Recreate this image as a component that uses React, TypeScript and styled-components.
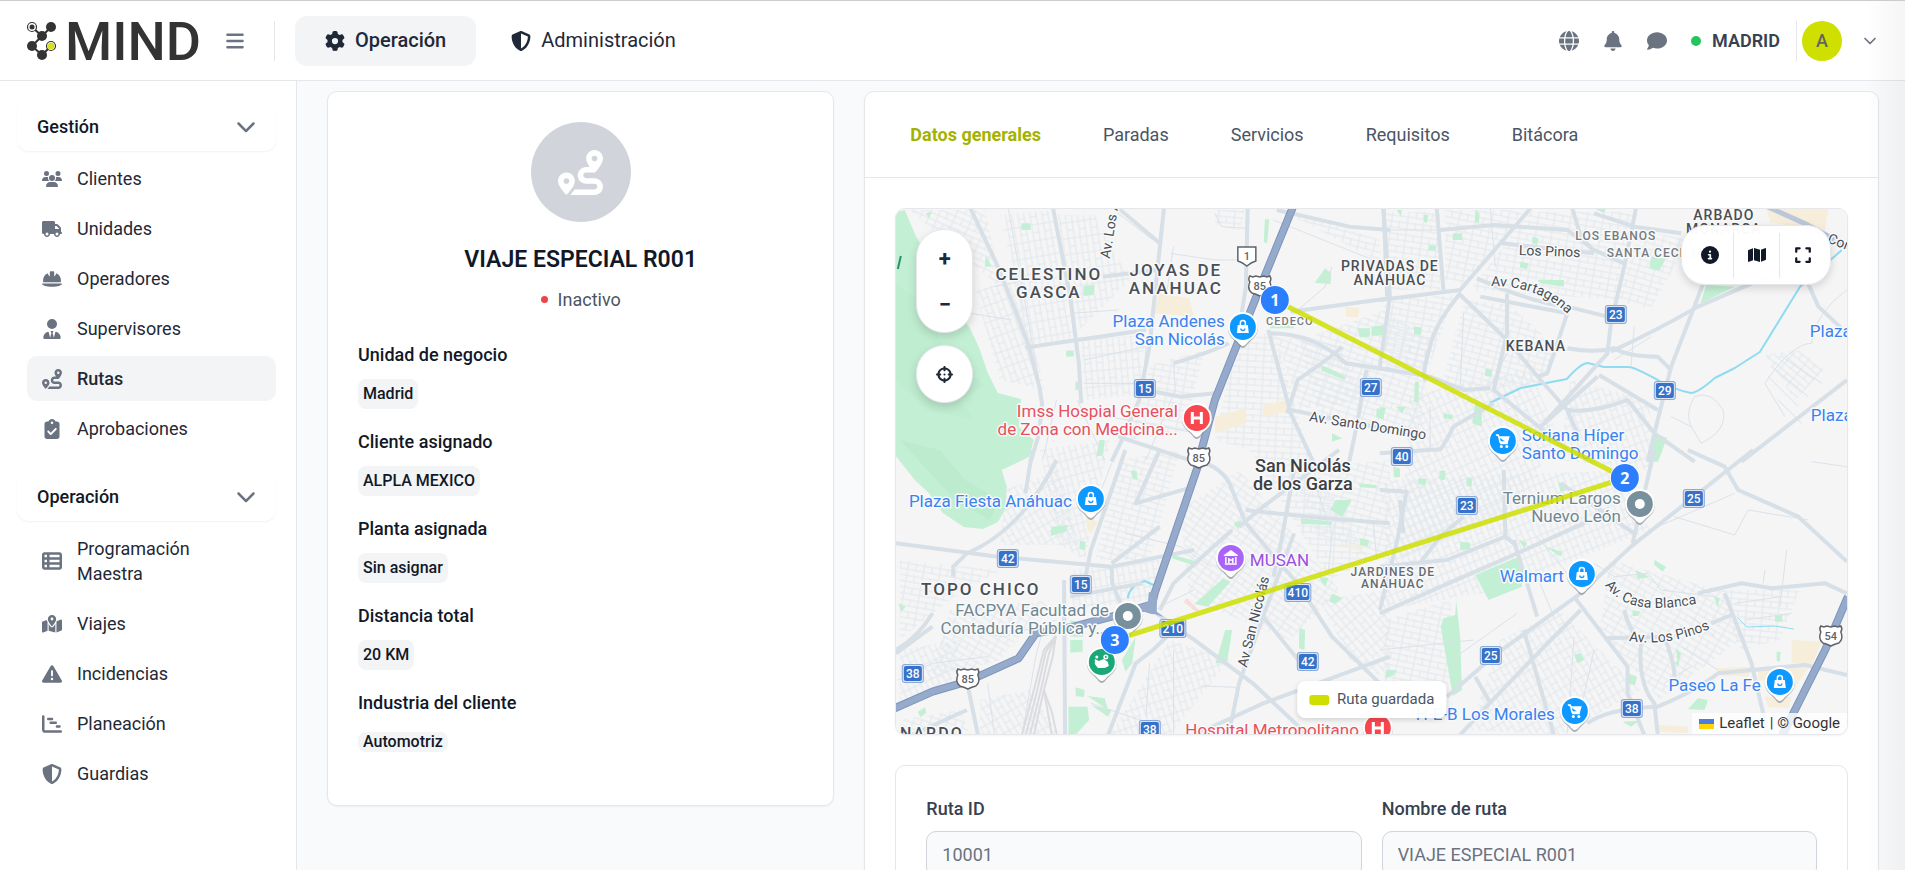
import React from 'react';
import styled, { createGlobalStyle } from 'styled-components';
import {
  FaBars,
  FaBell,
  FaChartGantt,
  FaChevronDown,
  FaCircleInfo,
  FaClipboardCheck,
  FaComment,
  FaCrosshairs,
  FaExpand,
  FaGear,
  FaGlobe,
  FaHelmetSafety,
  FaMap,
  FaMapLocationDot,
  FaRoute,
  FaShieldHalved,
  FaTableList,
  FaTriangleExclamation,
  FaTruck,
  FaUserTie,
  FaUsers,
} from 'react-icons/fa6';
import { ChevronDown } from 'lucide-react';

const GlobalStyle = createGlobalStyle`
  *, *::before, *::after { box-sizing: border-box; }
  body {
    margin: 0;
    background: #f9fafc;
    color: #1f2937;
    font-family: Roboto, "Liberation Sans", sans-serif;
    font-size: 18px;
    line-height: 25px;
  }
  button, input { font: inherit; color: inherit; }
  button { background: none; border: 0; padding: 0; cursor: pointer; }
  a { color: inherit; text-decoration: none; }
  ul { list-style: none; margin: 0; padding: 0; }
  h1, h2, p, dl, dd { margin: 0; }
`;

/* ---------- shell ---------- */

const Shell = styled.div`
  position: relative;
  display: flex;
  flex-direction: column;
  height: 100vh;
  overflow: hidden;
  border-top: 1px solid #cccccc;
`;

const EdgeShade = styled.div`
  position: absolute;
  inset: 0 0 0 auto;
  width: 40px;
  pointer-events: none;
  background: linear-gradient(to right, rgba(0, 0, 0, 0), rgba(0, 0, 0, 0.04));
`;

const Header = styled.header`
  flex: none;
  display: flex;
  align-items: center;
  height: 80px;
  padding: 0 25px 0 26px;
  background: #fff;
  border-bottom: 1px solid #e5e7eb;
`;

const Logo = styled.svg`
  width: 176px;
  height: 44px;
  overflow: visible;
`;

const IconButton = styled.button`
  display: flex;
  align-items: center;
  justify-content: center;
  width: 20px;
  height: 20px;
  color: #6b7280;
  font-size: 20px;
`;

const MenuButton = styled(IconButton)`
  margin: 0 29px 0 23px;
`;

const Rule = styled.span`
  width: 1px;
  height: 40px;
  background: #e5e7eb;
`;

const MainNav = styled.nav`
  display: flex;
  gap: 5px;
  margin-left: 20px;
`;

const MainNavLink = styled.a<{ $active?: boolean }>`
  display: flex;
  align-items: center;
  gap: 10px;
  height: 50px;
  padding: 0 30px;
  border-radius: 12px;
  background: ${p => (p.$active ? '#f3f4f6' : 'transparent')};
  font-size: 20px;
  font-weight: ${p => (p.$active ? 500 : 400)};
`;

const HeaderTools = styled.div`
  display: flex;
  align-items: center;
  gap: 24px;
  margin-left: auto;
`;

const Unit = styled.span`
  display: flex;
  align-items: center;
  gap: 11px;
  margin-right: -8px;
  font-weight: 600;
  color: #374151;
`;

const Dot = styled.span<{ $size: number; $color: string }>`
  width: ${p => p.$size}px;
  height: ${p => p.$size}px;
  border-radius: 50%;
  background: ${p => p.$color};
`;

const Account = styled.button`
  display: flex;
  align-items: center;
  color: #6b7280;
`;

const Avatar = styled.span`
  display: grid;
  place-items: center;
  width: 40px;
  height: 40px;
  margin: 0 18px 0 5px;
  border-radius: 50%;
  background: #cfdf00;
  color: #62665f;
  font-weight: 500;
`;

const Body = styled.div`
  flex: 1;
  display: flex;
  min-height: 0;
`;

/* ---------- sidebar ---------- */

const Sidebar = styled.aside`
  flex: none;
  width: 297px;
  padding: 20px 20px 20px 17px;
  background: #fff;
  border-right: 1px solid #e5e7eb;
`;

const Section = styled.section`
  margin-bottom: 20px;
`;

const SectionToggle = styled.button`
  display: flex;
  align-items: center;
  justify-content: space-between;
  width: 100%;
  height: 50px;
  padding: 0 20px;
  border-radius: 12px;
  box-shadow: 0 1px 2px rgba(0, 0, 0, 0.06);
  font-weight: 500;
  color: #111827;

  svg { color: #6b7280; font-size: 20px; }
`;

const SideList = styled.ul`
  display: flex;
  flex-direction: column;
  gap: 5px;
  margin: 5px 0 0 10px;
`;

const SideLink = styled.a<{ $active?: boolean }>`
  display: flex;
  align-items: center;
  gap: 15px;
  padding: 10px 60px 10px 15px;
  border-radius: 10px;
  background: ${p => (p.$active ? '#f3f4f6' : 'transparent')};
  font-weight: ${p => (p.$active ? 500 : 400)};

  svg { flex: none; width: 20px; height: 20px; color: #6b7280; }
`;

/* ---------- main area ---------- */

const Main = styled.main`
  flex: 1;
  min-width: 0;
  display: grid;
  grid-template-columns: minmax(0, 1fr) minmax(0, 2fr);
  align-items: start;
  gap: 30px;
  padding: 10px 26px 30px 30px;
  overflow: auto;
  scrollbar-width: none;
`;

const Card = styled.section`
  background: #fff;
  border: 1px solid #e5e7eb;
  border-radius: 10px;
  box-shadow: 0 1px 2px rgba(0, 0, 0, 0.05);
`;

const SummaryCard = styled(Card)`
  display: flex;
  flex-direction: column;
  align-items: center;
  padding: 30px 30px 48px;
`;

const RouteBadge = styled.div`
  display: grid;
  place-items: center;
  width: 100px;
  height: 100px;
  border-radius: 50%;
  background: #d1d5db;
  color: #fff;
  font-size: 45px;
`;

const RouteName = styled.h1`
  margin-top: 23px;
  font-size: 23px;
  line-height: 30px;
  font-weight: 600;
  color: #111827;
`;

const Status = styled.p`
  display: flex;
  align-items: center;
  gap: 10px;
  margin-top: 12px;
  color: #4b5563;
`;

const Facts = styled.dl`
  display: flex;
  flex-direction: column;
  gap: 20px;
  width: 100%;
  margin-top: 30px;
`;

const FactLabel = styled.dt`
  font-weight: 500;
  color: #111827;
`;

const FactValue = styled.dd<{ $compact?: boolean }>`
  display: flex;
  align-items: center;
  width: fit-content;
  height: ${p => (p.$compact ? 20 : 30)}px;
  margin: ${p => (p.$compact ? 17 : 12)}px 0 ${p => (p.$compact ? 5 : 0)}px;
  padding: 0 5px;
  border-radius: 8px;
  background: #f3f4f6;
  font-size: 16px;
  line-height: 20px;
  font-weight: 500;
  color: #111827;
`;

const Tabs = styled.nav`
  display: flex;
  gap: 62px;
  padding: 30px 45px;
  border-bottom: 1px solid #e5e7eb;
`;

const Tab = styled.a<{ $active?: boolean }>`
  font-weight: ${p => (p.$active ? 700 : 400)};
  color: ${p => (p.$active ? '#a3b300' : '#4b5563')};
`;

const Panel = styled.div`
  display: flex;
  flex-direction: column;
  gap: 30px;
  padding: 30px;
`;

/* ---------- map frame ---------- */

const MapFrame = styled.div`
  position: relative;
  height: 527px;
  border: 1px solid #e5e7eb;
  border-radius: 10px;
  overflow: hidden;
  box-shadow: 0 1px 2px rgba(0, 0, 0, 0.05);
`;

const MapSvg = styled.svg`
  display: block;
  width: 100%;
  height: 100%;
  font-family: Roboto, "Liberation Sans", sans-serif;
`;

const MapControls = styled.div`
  position: absolute;
  top: 20px;
  left: 20px;
  display: flex;
  flex-direction: column;
  gap: 12px;
`;

const ControlPill = styled.div`
  display: flex;
  flex-direction: column;
  width: 57px;
  padding: 5px 0;
  border: 1px solid #e5e7eb;
  border-radius: 28px;
  background: #fff;
  box-shadow: 0 4px 10px rgba(0, 0, 0, 0.15);
`;

const ControlButton = styled.button`
  display: grid;
  place-items: center;
  height: 46px;
  color: #1f2937;
  font-size: 22px;
  font-weight: 700;
`;

const MapToolbar = styled.div`
  position: absolute;
  top: 16px;
  right: 16px;
  display: flex;
  align-items: center;
  height: 60px;
  padding: 0 5px;
  border: 1px solid #e5e7eb;
  border-radius: 24px;
  background: rgba(255, 255, 255, 0.97);
  box-shadow: 0 3px 8px rgba(0, 0, 0, 0.15);
`;

const ToolButton = styled.button`
  display: grid;
  place-items: center;
  width: 46px;
  height: 45px;
  color: #111827;
  font-size: 18px;

  & + & { border-left: 1px solid #e5e7eb; }
`;

const Legend = styled.div`
  position: absolute;
  bottom: 16px;
  left: 50%;
  transform: translateX(-50%);
  display: flex;
  align-items: center;
  gap: 8px;
  height: 37px;
  padding: 0 12px;
  border-radius: 8px;
  background: rgba(255, 255, 255, 0.95);
  box-shadow: 0 2px 5px rgba(0, 0, 0, 0.14);
  font-size: 15px;
  white-space: nowrap;
  color: #4b5563;
`;

const LegendSwatch = styled.span`
  width: 20px;
  height: 10px;
  border-radius: 3px;
  background: #cfdf00;
`;

const Attribution = styled.div`
  position: absolute;
  right: 0;
  bottom: 0;
  display: flex;
  align-items: center;
  gap: 5px;
  padding: 0 7px;
  background: rgba(255, 255, 255, 0.8);
  font-size: 15px;
  line-height: 21px;
  color: #333;
`;

/* ---------- form ---------- */

const Form = styled.form`
  display: grid;
  grid-template-columns: 1fr 1fr;
  gap: 20px;
  padding: 30px;
  border: 1px solid #e5e7eb;
  border-radius: 10px;
`;

const Field = styled.div`
  display: flex;
  flex-direction: column;
  gap: 10px;
`;

const FieldLabel = styled.label`
  font-weight: 500;
  color: #374151;
`;

const TextInput = styled.input`
  width: 100%;
  height: 47px;
  padding: 0 15px;
  border: 1px solid #d1d5db;
  border-radius: 10px;
  background: #f9fafb;
  color: #6b7280;
`;

/* ---------- map drawing ---------- */

const GREEN = '#c3f0d4';
const CREAM = '#f6eddb';

type Tile = {
  at: string;
  roads: string[];
  lanes: string[];
  parks: string[];
  highway: string[];
  sand: string[];
};

/* The drawing is split in four tiles, each with its own origin and scale. */
const tiles: Tile[] = [
  {
    at: 'translate(850 80) scale(.3444 .3333)',
    roads: [
      'M350 385L430 560L480 690L520 800L550 920L558 970L550 1060L525 1145',
      'M590 385L640 650L665 850L672 970',
      'M912 385L890 600L870 800L840 960L790 1080L760 1145',
      'M1155 385L1150 620L1130 750',
      'M780 385L900 490',
      'M510 803L660 780L860 750',
      'M735 590L890 570',
      'M860 930L960 950L1060 940',
      'M940 850Q1040 820 1100 790',
      'M1280 695L1568 655',
      'M1240 390L1450 440L1568 450',
      'M1550 385L1560 650',
      'M1215 750L1280 1000L1345 1145',
      'M1220 760Q1350 760 1440 850L1568 870',
      'M1270 1000L1300 900Q1400 830 1430 800',
      'M1500 870Q1480 1000 1450 1145',
      'M780 1070L1000 1145',
      'M1280 990L1568 1050',
    ],
    lanes: [
      'M460 385L540 850L560 960', 'M680 910H830', 'M760 385L880 480', 'M940 500L920 640',
      'M930 520L1060 540L1140 540', 'M940 850L945 930L860 1140', 'M680 840L860 800L850 930',
      'M1060 400L1080 440L1150 445', 'M700 1000L1010 1060', 'M600 960L560 1140', 'M660 960L740 1140',
      'M1290 700L1380 620L1400 560', 'M1230 420L1568 560', 'M420 620L560 590', 'M640 700L780 690',
      'M470 720L350 700',
    ],
    parks: [
      '498,430 525,430 525,450 498,450', '678,618 710,615 708,645 678,648', '395,525 412,560 392,560',
      '1205,418 1218,418 1212,490 1202,485', '1380,565 1398,580 1396,612 1350,608', '655,905 664,905 664,930 655,930',
      '628,812 650,812 650,830 628,830', '1370,855 1440,890 1438,900 1370,872', '1475,745 1510,745 1510,770 1480,772',
      '1515,740 1552,735 1552,765 1515,768', '1530,985 1552,990 1550,1020 1528,1010', '1400,1060 1430,1075 1400,1085',
      '220,400 238,395 230,415', '1220,735 1290,735 1290,745 1220,745', '725,1080 740,1080 735,1125 715,1130',
    ],
    highway: ['M1287 380L1200 600L1110 830L1060 960L1012 1145'],
    sand: ['895,640 985,655 1000,710 885,700', '1440,680 1480,685 1475,712 1440,710', '1060,1010 1150,985 1150,1030 1060,1060', '1200,975 1270,960 1270,995 1200,1010'],
  },
  {
    at: 'translate(1380 80) scale(.3348 .3333)',
    roads: [
      'M10 385L30 650L0 860',
      'M170 385L190 630',
      'M0 660L240 630L450 385',
      'M180 450L340 435L560 450L640 510L730 550',
      'M575 385L600 470L640 515',
      'M765 385L730 560L690 730L680 820L490 1030',
      'M290 595Q460 670 560 680L680 710',
      'M235 640L380 780L480 900L560 990L590 1060',
      'M690 815Q830 750 950 680L1250 550',
      'M970 600L870 860L820 1060L800 1145',
      'M560 700L500 880L470 890',
      'M560 805Q640 820 700 805Q740 830 830 830L870 870',
      'M240 640Q160 740 150 800Q120 900 140 900',
      'M0 865L150 890L250 930L330 925',
      'M340 970L220 1040Q190 1100 180 1108L0 1120',
      'M655 885L830 990',
      'M650 890L480 1040',
      'M560 990Q640 1000 740 960L820 1060L940 1145',
      'M1395 900L1080 1145',
      'M1270 590L1310 680L1395 760',
      'M380 640L380 760L340 930L560 1110',
      'M365 490L640 520',
      'M300 650L560 700',
      'M640 400L760 440L900 460',
    ],
    lanes: [
      'M330 385L345 560', 'M0 450H170', 'M150 980L150 1110', 'M250 700L240 920', 'M400 780L330 920',
      'M870 1010L930 1040L960 1090Q1040 1050 1025 990Q990 930 940 950Q910 1000 930 1040',
      'M1395 630Q1300 700 1290 790Q1230 790 1150 910L1210 1010', 'M1190 960L1260 1030', 'M700 840L810 770',
      'M760 740L750 860', 'M1170 860L1280 950', 'M1160 890L1250 980', 'M1200 830L1320 910',
    ],
    parks: [
      '285,390 298,400 296,430 284,425', '218,460 246,460 246,480 218,480', '455,470 474,475 470,495 455,490',
      '420,545 444,550 440,568 418,562', '470,600 550,600 550,620 480,610', '146,495 168,497 166,512 144,510',
      '130,405 145,405 140,430 132,425', '810,530 855,535 835,572 805,565', '975,615 1060,620 958,670',
      '102,740 125,742 122,765 102,762', '315,865 335,870 334,890 314,888', '285,970 305,985 304,1040 276,1030',
      '105,905 117,905 115,970 102,965', '825,1060 858,1075 830,1145 800,1145', '190,1000 220,1005 215,1018 190,1015',
      '0,980 18,985 10,1015 0,1015', '640,385 675,385 670,400', '50,390 66,390 62,408', '48,980 78,980 66,1000',
    ],
    highway: [],
    sand: ['1155,385 1340,385 1330,450 1240,440 1165,425'],
  },
  {
    at: 'translate(850 450) scale(.3444 .3333)',
    roads: [
      'M134 280L430 320L760 350L1000 300',
      'M300 380V350L340 310Q500 240 600 30',
      'M530 0L510 130',
      'M800 0L700 300L680 400',
      'M760 350L762 400L790 470',
      'M622 390L625 855',
      'M134 600Q200 560 240 490',
      'M345 720L372 855',
      'M640 440L850 400',
      'M900 230L760 340',
      'M1000 30Q1090 50 1110 120L1150 220L1240 330L1300 400L1400 560L1568 730',
      'M1110 240Q980 360 940 400L900 480',
      'M890 490L1000 570L1170 700L1330 855',
      'M750 855L830 640L880 600L930 550',
      'M1230 380L1250 290L1290 60',
      'M1290 250L1200 500L1130 700L1100 855',
      'M1150 180Q1300 200 1568 220',
      'M1200 500L1310 640',
      'M1568 620L1200 760L1000 855',
      'M240 530L134 610',
      'M340 780L180 855',
      'M900 0L830 160L1000 110',
      'M1420 0L1200 170L1130 230',
    ],
    lanes: [
      'M700 760L870 820', 'M1020 708L1120 712L1130 740', 'M1000 420L900 470', 'M300 540L450 560L600 510',
      'M140 690L240 640L400 620', 'M560 540L540 620L500 855', 'M800 250L960 290L1050 350', 'M940 600L940 855',
      'M400 700L420 855', 'M1350 100L1400 250L1390 360', 'M760 40L700 200', 'M870 640L860 800',
      'M1520 220L1530 330',
    ],
    parks: [
      '1085,385 1105,395 1040,470 1000,462', '1090,540 1110,540 1095,640 1062,640', '1305,535 1322,540 1320,600 1304,595',
      '640,510 680,520 678,560 640,560', '640,570 676,570 676,605 640,608', '635,770 690,770 695,810 655,855 635,855',
      '790,630 830,560 820,640 800,665', '668,272 685,275 682,300 666,297', '585,230 635,225 625,245 583,258',
      '655,712 682,720 680,742 656,738', '197,785 218,772 222,788 205,802', '690,738 740,745 750,780',
      '1400,430 1430,445 1410,462 1392,455', '1310,205 1400,215 1400,225 1310,222', '815,62 832,62 836,90 822,85',
      '140,460 162,470 150,485', '1478,100 1530,105 1530,115 1480,112', '1115,220 1138,210 1128,240',
      '1410,150 1458,150 1430,200 1395,180', '1480,265 1508,270 1505,290 1482,285', '1360,380 1390,385 1380,410',
      '940,315 1010,335 1005,348 935,325', '700,765 760,780 750,800',
    ],
    highway: [
      'M1018 0L1010 50L885 430L872 490',
      'M130 775L240 725L340 695L490 625L540 550L650 530L760 500L870 465',
    ],
    sand: ['685,200 720,215 700,250 690,240', '1410,280 1500,290 1480,300'],
  },
  {
    at: 'translate(1380 450) scale(.3348 .3333)',
    roads: [
      'M0 490L410 310L620 215',
      'M1115 0L750 290L600 430L350 610L200 740',
      'M400 270L470 500',
      'M430 540L520 855',
      'M580 440L740 650V730L790 855',
      'M600 480Q400 680 240 855',
      'M950 430L1080 400L1170 415L1330 400L1395 430',
      'M1030 430L1110 640L1160 855',
      'M1395 335L1250 200L1070 120L1030 50L920 0',
      'M620 820Q680 775 830 770Q950 720 1010 670L1270 645L1395 675',
      'M730 480Q740 530 780 580Q770 700 820 760L830 855',
      'M850 560Q880 640 880 680',
      'M670 565L860 560',
      'M990 520L1050 495',
      'M370 60L375 260L400 280',
      'M60 150L70 250',
      'M0 120L80 125L50 280L0 480',
      'M820 0L755 280',
      'M285 680L330 760',
      'M375 260L200 330L100 340L0 350',
      'M580 0L640 40',
      'M540 100L760 250',
      'M250 200L180 260L120 340',
    ],
    lanes: [
      'M0 600L280 570', 'M880 200L1060 255L1100 180L1280 210', 'M1395 50L1290 35', 'M1215 300L1195 470',
      'M850 700L930 650', 'M200 640L410 490', 'M830 230L1060 130', 'M1150 360L1145 400', 'M1090 510L1230 490',
      'M640 340L700 380L800 370L840 420L1000 440', 'M900 590L1010 660', 'M930 500L1000 560', 'M1060 460L1200 440',
      'M470 260L600 420', 'M470 380L520 500', 'M580 560L560 850', 'M640 600L600 780',
    ],
    parks: [
      '285,375 420,318 425,410 325,450', '228,450 240,560 245,720 218,738 182,530 190,505 225,495',
      '415,268 440,280 430,295', '495,290 545,305 540,320', '765,360 805,380 770,388', '240,275 270,278 270,298 240,300',
      '40,50 60,55 60,82 42,82', '178,62 196,62 194,90 178,88', '115,85 140,88 135,105 115,103',
      '260,83 276,85 274,110 258,108', '580,615 600,608 610,630 590,640', '740,670 768,680 762,705 740,700',
      '820,330 855,350 845,365 820,345', '1180,495 1202,495 1202,515 1180,515', '998,440 1015,445 1010,475',
      '20,660 50,660 42,675 15,685', '950,745 980,750 970,780 920,778', '755,480 780,485 770,498 755,498',
      '530,92 556,120 540,125', '725,815 775,812 750,830', '885,595 900,610 890,650', '1185,605 1197,605 1195,635 1185,632',
      '800,0 845,0 830,35 808,30', '880,635 895,635 890,650',
    ],
    highway: ['M1398 440L1330 600L1200 860'],
    sand: ['1230,570 1320,575 1290,645 1230,640', '1130,660 1280,655 1240,710 1130,690', '1010,655 1110,650 1100,680 1010,675', '1150,740 1230,740 1220,775 1160,770', '830,825 920,830 920,850 830,845'],
  },
];

/* Blocks of small streets: outline and the angle of the grid. */
const blocks: Array<[string, number]> = [
  ['910,210 985,210 1003,290 968,260', 24],
  ['975,290 1018,280 1045,390 1000,380', 70],
  ['1000,215 1055,210 1075,340 1030,350', 80],
  ['1058,215 1095,215 1130,280 1075,335', 82],
  ['1080,340 1145,335 1140,395 1085,400', 85],
  ['1150,365 1205,350 1185,430 1130,440', 10],
  ['1215,210 1245,210 1240,230 1215,225', 5],
  ['1295,212 1380,240 1380,262 1290,215', 14],
  ['1235,345 1275,330 1310,460 1370,560 1330,580 1250,450 1215,440', 3],
  ['1275,335 1340,345 1365,400 1300,410', 20],
  ['1300,340 1385,310 1430,340 1420,440 1320,420', 18],
  ['1382,212 1440,212 1440,290 1385,290', 8],
  ['1445,210 1525,210 1465,285 1445,280', 12],
  ['1530,212 1635,212 1620,300 1470,290', 10],
  ['1640,230 1690,240 1650,310 1615,300', 16],
  ['1465,300 1510,305 1560,350 1540,385 1440,390', 15],
  ['1385,300 1455,295 1430,365 1385,370', 10],
  ['1410,395 1530,370 1560,440 1500,520 1400,560', 65],
  ['1570,380 1650,400 1650,470 1560,460', 70],
  ['1385,480 1620,470 1650,530 1500,590 1385,610', 68],
  ['1385,620 1450,600 1460,660 1440,700 1385,690', 12],
  ['1500,640 1560,610 1640,690 1560,735 1470,730', 60],
  ['1610,560 1720,590 1740,640 1660,700 1600,630', 30],
  ['1720,590 1800,590 1780,640 1740,650', 5],
  ['1765,355 1800,350 1825,370 1795,400', 40],
  ['1005,490 1060,470 1080,545 1000,545', 60],
  ['1040,450 1110,440 1085,560 1060,545', 75],
  ['1120,460 1180,450 1150,560 1095,560', 15],
  ['900,560 1000,570 950,600 900,640', 10],
  ['950,610 1050,600 1000,660 930,680', 30],
  ['900,650 960,640 950,690 900,700', 65],
  ['900,720 960,710 970,735 900,735', 20],
  ['1180,510 1240,470 1340,590 1290,640 1190,600', 35],
  ['1290,470 1390,460 1390,560 1320,540', 15],
  ['1170,640 1230,660 1170,735 1110,735', 72],
  ['1070,570 1160,560 1150,600 1070,610', 80],
  ['980,700 1030,690 1060,735 980,735', 60],
  ['1320,600 1390,590 1390,680 1350,660', 50],
];

const gridAngles = Array.from(new Set(blocks.map(b => b[1])));

type LabelSpec = {
  x: number;
  y: number;
  lines: string[];
  color?: string;
  size?: number;
  weight?: number;
  anchor?: 'start' | 'middle' | 'end';
  tracking?: number;
  rotate?: number;
};

const BLUE = '#3b82f0';
const RED = '#e8505b';
const SLATE = '#71878f';
const INK = '#4a4f55';

const labels: LabelSpec[] = [
  { x: 1049, y: 280, lines: ['CELESTINO', 'GASCA'], size: 17, weight: 500, tracking: 2 },
  { x: 1176, y: 276, lines: ['JOYAS DE', 'ANAHUAC'], size: 17, weight: 500, tracking: 2 },
  { x: 1390, y: 271, lines: ['PRIVADAS DE', 'ANÁHUAC'], size: 14, weight: 500, tracking: 1 },
  { x: 1616, y: 240, lines: ['LOS EBANOS'], size: 12, weight: 500, tracking: 1, color: '#757b80' },
  { x: 1607, y: 257, lines: ['SANTA CECILIA'], size: 12, weight: 500, tracking: 1, color: '#757b80', anchor: 'start' },
  { x: 1724, y: 220, lines: ['ARBADO', 'MONARCA'], size: 14, weight: 500, tracking: 1 },
  { x: 1536, y: 351, lines: ['KEBANA'], size: 14, weight: 500, tracking: 1 },
  { x: 1290, y: 325, lines: ['CEDECO'], size: 11, weight: 500, tracking: 1, color: '#757b80' },
  { x: 981, y: 595, lines: ['TOPO CHICO'], size: 17, weight: 500, tracking: 2 },
  { x: 1393, y: 576, lines: ['JARDINES DE', 'ANÁHUAC'], size: 12, weight: 500, tracking: 1, color: '#666b70' },
  { x: 932, y: 739, lines: ['NARDO'], size: 16, weight: 500, tracking: 2 },
  { x: 1303, y: 472, lines: ['San Nicolás', 'de los Garza'], size: 18, weight: 500, color: '#3c4043' },
  { x: 1225, y: 327, lines: ['Plaza Andenes', 'San Nicolás'], color: BLUE, anchor: 'end' },
  { x: 1178, y: 417, lines: ['Imss Hospial General', 'de Zona con Medicina...'], color: RED, anchor: 'end' },
  { x: 1072, y: 507, lines: ['Plaza Fiesta Anáhuac'], color: BLUE, anchor: 'end' },
  { x: 1522, y: 441, lines: ['Soriana Híper', 'Santo Domingo'], color: BLUE, anchor: 'start' },
  { x: 1810, y: 337, lines: ['Plaza Las'], color: BLUE, anchor: 'start' },
  { x: 1811, y: 421, lines: ['Plaza Real'], color: BLUE, anchor: 'start' },
  { x: 1621, y: 504, lines: ['Ternium Largos', 'Nuevo León'], color: SLATE, anchor: 'end' },
  { x: 1564, y: 582, lines: ['Walmart'], color: BLUE, anchor: 'end' },
  { x: 1250, y: 566, lines: ['MUSAN'], color: '#9b4fe0', anchor: 'start' },
  { x: 1109, y: 616, lines: ['FACPYA Facultad de', 'Contaduría Pública y...'], color: SLATE, anchor: 'end' },
  { x: 1761, y: 691, lines: ['Paseo La Fe'], color: BLUE, anchor: 'end' },
  { x: 1555, y: 720, lines: ['H-E-B Los Morales'], color: BLUE, anchor: 'end' },
  { x: 1359, y: 736, lines: ['Hospital Metropolitano'], color: RED, anchor: 'end' },
  { x: 1110, y: 259, lines: ['Av. Los Ángeles'], size: 14, rotate: -81, anchor: 'start' },
  { x: 1247, y: 668, lines: ['Av San Nicolás'], size: 14, rotate: -76, anchor: 'start' },
  { x: 1309, y: 421, lines: ['Av. Santo Domingo'], size: 14, rotate: 9, anchor: 'start' },
  { x: 1519, y: 255, lines: ['Los Pinos'], size: 14, rotate: 2, anchor: 'start' },
  { x: 1827, y: 242, lines: ['Conchello'], size: 14, rotate: 22, anchor: 'start' },
];

function MapLabel({ x, y, lines, color = INK, size = 17, weight = 400, anchor = 'middle', tracking = 0, rotate = 0 }: LabelSpec) {
  return (
    <text
      transform={`rotate(${rotate} ${x} ${y})`}
      fontSize={size}
      fontWeight={weight}
      fill={color}
      textAnchor={anchor}
      letterSpacing={tracking}
      stroke="#f8f9fa"
      strokeWidth="3"
      strokeLinejoin="round"
      paintOrder="stroke"
    >
      {lines.map((line, i) => (
        <tspan key={line} x={x} y={y + i * (size > 15 ? 18 : size)}>{line}</tspan>
      ))}
    </text>
  );
}

type PinKind = 'bag' | 'cart' | 'hospital' | 'dot' | 'museum' | 'zoo';

const pinColor: Record<PinKind, string> = {
  bag: '#0d99ff',
  cart: '#0d99ff',
  hospital: '#f8474f',
  dot: '#78909c',
  museum: '#a964f7',
  zoo: '#1aa876',
};

const pins: Array<[PinKind, number, number]> = [
  ['bag', 1243, 327], ['hospital', 1197, 418], ['bag', 1091, 499], ['cart', 1503, 441],
  ['dot', 1640, 504], ['bag', 1582, 574], ['bag', 1780, 682], ['cart', 1575, 711],
  ['museum', 1231, 558], ['dot', 1128, 616], ['zoo', 1102, 662], ['hospital', 1378, 728],
];

const pinGlyph: Record<PinKind, React.ReactNode> = {
  bag: (
    <>
      <path d="M-5 -2H5L6 6H-6Z" fill="#fff" />
      <path d="M-2.500 -2V-4a2.500 2.500 0 0 1 5 0V-2" fill="none" stroke="#fff" strokeWidth="1.500" />
      <path d="M-2 1.500a2 2 0 0 0 4 0" fill="none" stroke="#0d99ff" strokeWidth="1.300" />
    </>
  ),
  cart: (
    <>
      <path d="M-7 -6H-4.500L-2 2.500H5M-4 -4H6L4.500 1H-3Z" fill="#fff" stroke="#fff" strokeWidth="1.300" />
      <circle cx="-1.500" cy="5.500" r="1.500" fill="#fff" />
      <circle cx="4" cy="5.500" r="1.500" fill="#fff" />
    </>
  ),
  hospital: <path d="M-4.500 -6V6M4.500 -6V6M-4.500 0H4.500" stroke="#fff" strokeWidth="3" fill="none" />,
  dot: <circle r="5" fill="#fff" />,
  museum: (
    <>
      <path d="M0 -8L7 -3V-2H-7V-3Z" fill="#fff" />
      <path d="M-6 6H6M-5 -1V5M5 -1V5M-2 0V5M2 0V5M-2 2H2" stroke="#fff" strokeWidth="1.500" fill="none" />
    </>
  ),
  zoo: (
    <>
      <path d="M-7 -3L-3 -1L2 -3L6 0L7 4L3 6L-4 6L-7 2Z" fill="#fff" />
      <circle cx="-5" cy="-5" r="1.500" fill="#fff" />
      <circle cx="4" cy="-5" r="2.500" fill="#fff" />
      <circle cx="4" cy="-5" r="1" fill="#1aa876" />
    </>
  ),
};

function Pin({ kind, x, y }: { kind: PinKind; x: number; y: number }) {
  return (
    <g transform={`translate(${x} ${y})`}>
      <path d="M0 20C-3 20 -4 16 -9 12A15 15 0 1 1 9 12C4 16 3 20 0 20Z" fill="#7b8288" opacity=".6" transform="translate(0 1)" />
      <path d="M0 19C-3 19 -4 15 -9 12A15 15 0 1 1 9 12C4 15 3 19 0 19Z" fill="#fff" />
      <circle r="13" fill={pinColor[kind]} />
      {pinGlyph[kind]}
    </g>
  );
}

const stateRoads: Array<[string, number, number]> = [
  ['15', 1145, 388], ['27', 1371, 387], ['23', 1616, 314], ['29', 1665, 390], ['40', 1402, 456],
  ['23', 1467, 505], ['25', 1694, 498], ['42', 1008, 558], ['15', 1081, 584], ['410', 1298, 592],
  ['210', 1173, 628], ['42', 1308, 661], ['38', 913, 673], ['38', 1150, 729], ['25', 1491, 655],
  ['38', 1632, 708],
];

function StateRoad({ name, x, y }: { name: string; x: number; y: number }) {
  const w = name.length > 2 ? 23 : 18;
  return (
    <g transform={`translate(${x} ${y})`}>
      <rect x={-w / 2 - 2} y="-9" width={w + 4} height="19" rx="3" fill="#8ba9d8" />
      <rect x={-w / 2 - 1} y="-8" width={w + 2} height="17" rx="2" fill="#dbe5f5" />
      <rect x={-w / 2} y="-7" width={w} height="15" rx="2" fill="#3672c9" />
      <text y="5" textAnchor="middle" fontSize="12" fontWeight="500" fill="#fff">{name}</text>
    </g>
  );
}

const federalRoads: Array<[string, number, number]> = [['85', 1260, 286], ['85', 1199, 458], ['85', 968, 679], ['54', 1831, 636]];

function FederalRoad({ name, x, y }: { name: string; x: number; y: number }) {
  return (
    <g transform={`translate(${x} ${y})`}>
      <path
        d="M-10 -10L-7 -9L-4 -10L0 -9L4 -10L7 -9L10 -10Q12 -7 10 -4Q13 3 8 7Q4 8 0 10Q-4 8 -8 7Q-13 3 -10 -4Q-12 -7 -10 -10Z"
        fill="#fff" stroke="#5f6368" strokeWidth="1.500"
      />
      <text y="4" textAnchor="middle" fontSize="11" fontWeight="500" fill="#5f6368">{name}</text>
    </g>
  );
}

const stops: Array<[number, number]> = [[1275, 300], [1625, 478], [1115, 640]];

function RouteMap() {
  return (
    <MapSvg viewBox="896 209 951 525" preserveAspectRatio="xMidYMid slice" role="img" aria-label="Mapa de la ruta">
      <defs>
        {gridAngles.map(angle => (
          <pattern key={angle} id={`grid-${angle}`} width="16" height="12" patternUnits="userSpaceOnUse" patternTransform={`rotate(${angle})`}>
            <path d="M0 1H16M0 7H16M1 0V12M9 0V7" stroke="#e1e7ed" strokeWidth="1" fill="none" />
          </pattern>
        ))}
        <path id="cartagena" d="M1491 286Q1545 286 1575 322" />
        <path id="casa-blanca" d="M1605 585Q1622 608 1655 608Q1680 608 1710 601" />
        <path id="los-pinos" d="M1629 641Q1672 648 1720 624" />
      </defs>

      <rect x="896" y="209" width="951" height="525" fill="#f5f5f5" />
      {blocks.map(([points, angle], i) => (
        <polygon key={i} points={points} fill={`url(#grid-${angle})`} />
      ))}

      <path d="M896 212L905 210L916 236L932 262L950 300L970 328L979 347L988 373L998 393L1021 399L1019 427L1034 440L1029 457L1002 470L1007 487L1005 510L998 522L983 529L964 527L943 513L929 493L915 480L896 456Z" fill={GREEN} />
      <path d="M896 285L920 300L950 360L985 385L960 400L975 420L930 410L896 380Z" fill="#bdebce" opacity=".7" />
      <path d="M900 440L940 450L965 480L1000 500L990 520L955 500Z" fill="#b7e8c9" opacity=".6" />

      {tiles.map(tile => (
        <g key={tile.at} transform={tile.at}>
          {tile.sand.map(points => <polygon key={points} points={points} fill={CREAM} />)}
          {tile.parks.map(points => <polygon key={points} points={points} fill={GREEN} />)}
          {tile.lanes.map(d => (
            <path key={d} d={d} fill="none" stroke="#dbe2ea" strokeWidth="1" vectorEffect="non-scaling-stroke" />
          ))}
        </g>
      ))}

      <g fill="none" stroke="#8fdcf0" strokeWidth="2" strokeLinejoin="round">
        <path d="M1842 250L1800 287L1760 352L1735 368L1715 378Q1698 393 1691 393Q1675 390 1658 380Q1634 367 1629 367L1604 367L1588 363Q1581 363 1567 379L1521 388L1490 403" />
        <path d="M1128 598Q1130 585 1145 581L1160 588" />
        <path d="M1738 618L1747 627L1775 626L1794 629" strokeWidth="1" />
      </g>
      <g fill="none" stroke="#dadcdf" strokeWidth="2">
        <path d="M1056 636L1044 650L1034 690L1022 735" />
        <path d="M1056 636L1046 652L1037 692L1026 735" />
        <path d="M1056 636L1049 654L1041 690L1030 735" />
        <path d="M1056 636L1053 656L1044 690L1034 735" />
        <path d="M1044 690L1052 712L1057 735" />
        <path d="M1044 690L1048 712L1052 735" />
      </g>

      {tiles.map(tile => (
        <g key={tile.at} transform={tile.at} fill="none" strokeLinejoin="round">
          {tile.roads.map(d => (
            <path key={d} d={d} stroke="#d7dfe7" strokeWidth="4" vectorEffect="non-scaling-stroke" />
          ))}
        </g>
      ))}
      {tiles.map(tile => (
        <g key={tile.at} transform={tile.at} fill="none" strokeLinejoin="round">
          {tile.highway.map(d => (
            <React.Fragment key={d}>
              <path d={d} stroke="#7d94bb" strokeWidth="8" vectorEffect="non-scaling-stroke" />
              <path d={d} stroke="#96abcc" strokeWidth="6" vectorEffect="non-scaling-stroke" />
            </React.Fragment>
          ))}
        </g>
      ))}
      <path d="M1149 592L1157 594L1157 612L1164 617L1148 612L1138 612L1138 606L1148 602Z" fill="#96abcc" />
      <path d="M1766 206L1806 224L1850 248" fill="none" stroke="#b9c7d9" strokeWidth="5" />
      <path d="M1187 598L1200 611L1195 611L1184 602Z" fill="#f9dcdc" />

      {stateRoads.map(([name, x, y]) => <StateRoad key={`${name}-${x}`} name={name} x={x} y={y} />)}
      {federalRoads.map(([name, x, y]) => <FederalRoad key={`${name}-${x}`} name={name} x={x} y={y} />)}
      <g transform="translate(1247 256)">
        <path d="M-9 -9H9V5Q5 6 0 10Q-5 6 -9 5Z" fill="#fff" stroke="#5f6368" strokeWidth="1.500" />
        <text y="4" textAnchor="middle" fontSize="11" fontWeight="500" fill="#5f6368">1</text>
      </g>

      {labels.map(label => <MapLabel key={`${label.x}-${label.y}`} {...label} />)}
      <g fontSize="14" fill={INK} stroke="#f8f9fa" strokeWidth="3" paintOrder="stroke">
        <text><textPath href="#cartagena">Av Cartagena</textPath></text>
        <text><textPath href="#casa-blanca">Av. Casa Blanca</textPath></text>
        <text><textPath href="#los-pinos">Av. Los Pinos</textPath></text>
      </g>
      <path d="M898 269L901 256" stroke="#2f8f6b" strokeWidth="2" />

      {pins.map(([kind, x, y]) => <Pin key={`${x}-${y}`} kind={kind} x={x} y={y} />)}

      <polyline points={stops.map(s => s.join(',')).join(' ')} fill="none" stroke="#cfdf00" strokeWidth="5" strokeLinejoin="round" opacity=".85" />
      {stops.map(([x, y], i) => (
        <g key={x} transform={`translate(${x} ${y})`}>
          <circle r="15" fill="#fff" />
          <circle r="14" fill="#2b7fff" />
          <text y="6" textAnchor="middle" fontFamily='"Open Sans", sans-serif' fontSize="16" fontWeight="700" fill="#fff">{i + 1}</text>
        </g>
      ))}
    </MapSvg>
  );
}

/* ---------- content ---------- */

const management = [
  { label: 'Clientes', icon: <FaUsers /> },
  { label: 'Unidades', icon: <FaTruck /> },
  { label: 'Operadores', icon: <FaHelmetSafety /> },
  { label: 'Supervisores', icon: <FaUserTie /> },
  { label: 'Rutas', icon: <FaRoute />, active: true },
  { label: 'Aprobaciones', icon: <FaClipboardCheck /> },
];

const operation = [
  { label: 'Programación Maestra', icon: <FaTableList /> },
  { label: 'Viajes', icon: <FaMapLocationDot /> },
  { label: 'Incidencias', icon: <FaTriangleExclamation /> },
  { label: 'Planeación', icon: <FaChartGantt /> },
  { label: 'Guardias', icon: <FaShieldHalved /> },
];

const facts = [
  { label: 'Unidad de negocio', value: 'Madrid' },
  { label: 'Cliente asignado', value: 'ALPLA MEXICO' },
  { label: 'Planta asignada', value: 'Sin asignar' },
  { label: 'Distancia total', value: '20 KM' },
  { label: 'Industria del cliente', value: 'Automotriz', compact: true },
];

const tabs = ['Datos generales', 'Paradas', 'Servicios', 'Requisitos', 'Bitácora'];

type SideItem = { label: string; icon: React.ReactNode; active?: boolean };

function SideSection({ title, items }: { title: string; items: SideItem[] }) {
  return (
    <Section>
      <SectionToggle type="button" aria-expanded="true">
        {title}
        <FaChevronDown />
      </SectionToggle>
      <SideList>
        {items.map(item => (
          <li key={item.label}>
            <SideLink href="#" $active={item.active}>
              {item.icon}
              {item.label}
            </SideLink>
          </li>
        ))}
      </SideList>
    </Section>
  );
}

function MindLogo() {
  return (
    <Logo viewBox="26 19 176 44" role="img" aria-label="MIND">
      <path d="M32 27L42 36L51 27M42 36L32 46L42 55L51 46" fill="none" stroke="#333" strokeWidth="2" />
      <circle cx="51" cy="27" r="5" fill="#333" />
      <circle cx="42" cy="36" r="5" fill="#333" />
      <circle cx="32" cy="46" r="5" fill="#333" />
      <circle cx="42" cy="55" r="5" fill="#333" />
      <circle cx="32" cy="27" r="4.500" fill="#fff" stroke="#333" strokeWidth="1.200" />
      <circle cx="32" cy="27" r="2.500" fill="#333" />
      <circle cx="51" cy="46" r="4.500" fill="#fff" stroke="#333" strokeWidth="1.200" />
      <circle cx="51" cy="46" r="3.500" fill="#d7e021" />
      <text x="65" y="60" fontFamily="Roboto, sans-serif" fontSize="54" fontWeight="500" fill="#333">MIND</text>
    </Logo>
  );
}

export default function App() {
  return (
    <>
      <GlobalStyle />
      <Shell>
        <Header>
          <MindLogo />
          <MenuButton type="button" aria-label="Menú"><FaBars /></MenuButton>
          <Rule />
          <MainNav>
            <MainNavLink href="#" $active><FaGear />Operación</MainNavLink>
            <MainNavLink href="#"><FaShieldHalved />Administración</MainNavLink>
          </MainNav>
          <HeaderTools>
            <IconButton type="button" aria-label="Idioma"><FaGlobe /></IconButton>
            <IconButton type="button" aria-label="Notificaciones"><FaBell /></IconButton>
            <IconButton type="button" aria-label="Mensajes"><FaComment /></IconButton>
            <Unit><Dot $size={10} $color="#22c55e" />MADRID</Unit>
            <Account type="button" aria-label="Cuenta">
              <Rule />
              <Avatar>A</Avatar>
              <ChevronDown size={20} />
            </Account>
          </HeaderTools>
        </Header>

        <Body>
          <Sidebar>
            <SideSection title="Gestión" items={management} />
            <SideSection title="Operación" items={operation} />
          </Sidebar>

          <Main>
            <SummaryCard>
              <RouteBadge><FaRoute /></RouteBadge>
              <RouteName>VIAJE ESPECIAL R001</RouteName>
              <Status><Dot $size={7} $color="#ef4444" />Inactivo</Status>
              <Facts>
                {facts.map(fact => (
                  <div key={fact.label}>
                    <FactLabel>{fact.label}</FactLabel>
                    <FactValue $compact={fact.compact}>{fact.value}</FactValue>
                  </div>
                ))}
              </Facts>
            </SummaryCard>

            <Card>
              <Tabs>
                {tabs.map((tab, i) => <Tab key={tab} href="#" $active={i === 0}>{tab}</Tab>)}
              </Tabs>
              <Panel>
                <MapFrame>
                  <RouteMap />
                  <MapControls>
                    <ControlPill>
                      <ControlButton type="button" aria-label="Acercar">+</ControlButton>
                      <ControlButton type="button" aria-label="Alejar">−</ControlButton>
                    </ControlPill>
                    <ControlPill>
                      <ControlButton type="button" aria-label="Centrar"><FaCrosshairs size={17} /></ControlButton>
                    </ControlPill>
                  </MapControls>
                  <MapToolbar>
                    <ToolButton type="button" aria-label="Información"><FaCircleInfo /></ToolButton>
                    <ToolButton type="button" aria-label="Tipo de mapa"><FaMap /></ToolButton>
                    <ToolButton type="button" aria-label="Pantalla completa"><FaExpand /></ToolButton>
                  </MapToolbar>
                  <Legend><LegendSwatch />Ruta guardada</Legend>
                  <Attribution>
                    <svg width="15" height="10" viewBox="0 0 15 10" aria-hidden="true">
                      <rect width="15" height="5" fill="#4c7be1" />
                      <rect y="5" width="15" height="5" fill="#ffd500" />
                    </svg>
                    <a href="#">Leaflet</a>
                    <span>| © Google</span>
                  </Attribution>
                </MapFrame>

                <Form>
                  <Field>
                    <FieldLabel htmlFor="route-id">Ruta ID</FieldLabel>
                    <TextInput id="route-id" defaultValue="10001" readOnly />
                  </Field>
                  <Field>
                    <FieldLabel htmlFor="route-name">Nombre de ruta</FieldLabel>
                    <TextInput id="route-name" defaultValue="VIAJE ESPECIAL R001" readOnly />
                  </Field>
                </Form>
              </Panel>
            </Card>
          </Main>
        </Body>
        <EdgeShade />
      </Shell>
    </>
  );
}
